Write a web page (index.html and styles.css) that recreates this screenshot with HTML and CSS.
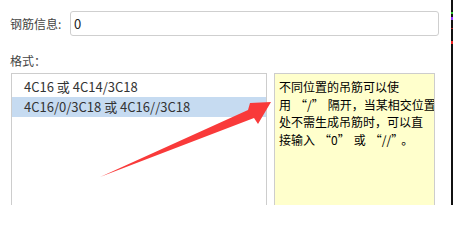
FILE: index.html
```html
<!DOCTYPE html>
<html lang="zh-CN">
<head>
<meta charset="utf-8">
<link rel="stylesheet" href="styles.css">
</head>
<body>
<div class="page">
  <div class="main">
    <div class="row">
      <label class="label">钢筋信息:</label>
      <div class="input">0</div>
    </div>
    <div class="section-label">格式：</div>
    <div class="boxes">
      <div class="list">
        <div class="item">4C16 或 4C14/3C18</div>
        <div class="item selected">4C16/0/3C18 或 4C16//3C18</div>
      </div>
      <div class="tip">不同位置的吊筋可以使<br>用<span class="q-open">“</span>/<span class="q-close">”</span>隔开，当某相交位置<br>处不需生成吊筋时，可以直<br>接输入<span class="q-open">“</span>0<span class="q-close">”</span>或<span class="q-open">“</span>//<span class="q-close">”</span>。</div>
    </div>
  </div>
  <div class="edge"></div>
  <svg class="arrow" width="453" height="205" viewBox="0 0 453 205">
    <polygon points="100,177 248,110 250,103 271,102 258,124 254,118" fill="#f93a3a"/>
  </svg>
</div>
</body>
</html>
```
FILE: styles.css
```css
html, body {
  margin: 0;
  padding: 0;
  background: #fff;
}
body {
  width: 453px;
  height: 205px;
  overflow: hidden;
  font-family: "Noto Sans CJK SC", "Noto Sans", sans-serif;
  color: #333;
}
.page {
  position: relative;
  display: flex;
  width: 453px;
  height: 205px;
}
.main {
  width: 451px;
  flex: none;
}
.edge {
  width: 2px;
  height: 205px;
  background: linear-gradient(to bottom, #111 0, #111 12px, #3c3 12px, #3c3 14px, #111 14px, #111 17px, #93f 17px, #93f 20px, #111 20px, #111 28px, #a22 28px, #a22 29px, #111 29px, #111 41px, #e22 41px, #e22 44px, #111 44px);
}
.row {
  display: flex;
  align-items: center;
  padding: 11px 0 0 10px;
  height: 25px;
}
.label {
  width: 60px;
  font-size: 12px;
  color: #444;
}
.input {
  width: 364px;
  height: 23px;
  border: 1px solid #cfcfcf;
  border-radius: 3px;
  padding-left: 3px;
  font-size: 13px;
  line-height: 23px;
  color: #222;
}
.section-label {
  margin: 13px 0 0 10px;
  height: 24px;
  font-size: 12px;
  line-height: 24px;
  color: #444;
}
.boxes {
  display: flex;
  gap: 7px;
  padding-left: 11px;
}
.list {
  width: 254px;
  height: 140px;
  border: 1px solid #cdcdcd;
  padding-top: 3px;
}
.item {
  height: 20px;
  line-height: 20px;
  padding-left: 12px;
  font-size: 13px;
  color: #333;
}
.item.selected {
  background: #c6dbf1;
}
.tip {
  width: 155px;
  height: 140px;
  border: 1px solid #cdcdcd;
  background: #ffffcc;
  padding: 4px 0 0 4px;
  font-size: 12px;
  line-height: 17.6px;
  color: #000;
  white-space: nowrap;
  overflow: hidden;
}
.q-open {
  margin-left: 4px;
}
.q-close {
  margin-right: 4px;
}
.arrow {
  position: absolute;
  left: 0;
  top: 0;
  pointer-events: none;
}
```
